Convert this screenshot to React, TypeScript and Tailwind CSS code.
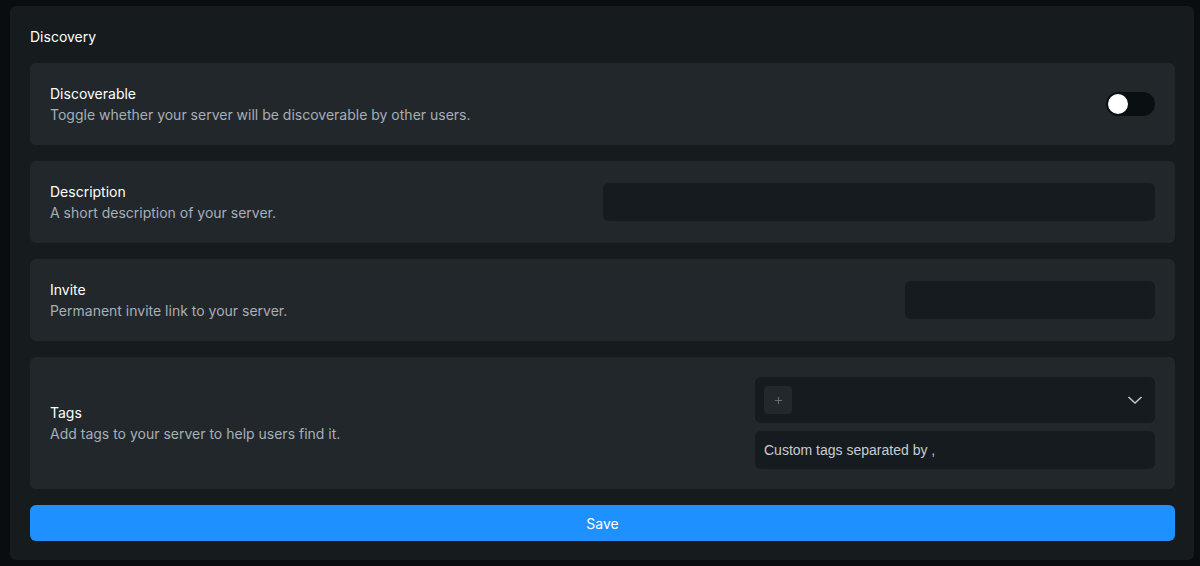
import React, { useState } from "react";
import { Plus } from "lucide-react";

function Row({
  title,
  desc,
  children,
  tall,
}: {
  title: string;
  desc: string;
  children?: React.ReactNode;
  tall?: boolean;
}) {
  return (
    <div
      className={`bg-[#21272b] rounded-md px-5 flex items-center justify-between ${
        tall ? "py-5" : "h-[82px]"
      }`}
    >
      <div>
        <div className="text-[14px] font-normal text-white leading-5">{title}</div>
        <div className="text-[14px] text-[#a7afb7] leading-5 mt-[1px]">{desc}</div>
      </div>
      {children}
    </div>
  );
}

export default function App() {
  const [on, setOn] = useState(false);

  return (
    <div className="min-h-[566px] bg-[#0a0d0f] pt-[6px] pl-[10px] pr-[6px] pb-[6px] font-['Inter',sans-serif]">
      <div className="bg-[#161b1e] rounded-md pl-5 pr-[19px] pt-[21px] pb-[19px]">
        <h2 className="text-[14px] font-normal text-white leading-5 mb-4">Discovery</h2>

        <div className="flex flex-col gap-4">
          <Row title="Discoverable" desc="Toggle whether your server will be discoverable by other users.">
            <button
              onClick={() => setOn(!on)}
              className={`w-[49px] h-[24px] rounded-full p-[2px] flex items-center ${
                on ? "bg-[#1e90ff] justify-end" : "bg-[#0a0f12] justify-start"
              }`}
            >
              <span className="w-[20px] h-[20px] rounded-full bg-white block" />
            </button>
          </Row>

          <Row title="Description" desc="A short description of your server.">
            <input className="w-[552px] h-[38px] bg-[#161b1f] rounded-md outline-none px-3 text-sm text-white" />
          </Row>

          <Row title="Invite" desc="Permanent invite link to your server.">
            <input className="w-[250px] h-[38px] bg-[#161b1f] rounded-md outline-none px-3 text-sm text-white" />
          </Row>

          <Row title="Tags" desc="Add tags to your server to help users find it." tall>
            <div className="w-[400px] flex flex-col gap-2">
              <div className="h-[46px] bg-[#161b1f] rounded-md flex items-center justify-between pl-[9px] pr-[12px]">
                <div className="w-[28px] h-[28px] rounded bg-[#22282c] flex items-center justify-center">
                  <Plus className="w-[11px] h-[11px] text-[#6b747c]" strokeWidth={2} />
                </div>
                <svg width="16" height="10" viewBox="0 0 16 10" fill="none">
                  <path d="M1.5 2 L8 8 L14.5 2" stroke="#c3cad1" strokeWidth="1.5" />
                </svg>
              </div>
              <input
                placeholder="Custom tags separated by ,"
                className="h-[38px] bg-[#161b1f] rounded-md outline-none px-[9px] text-[14px] text-white placeholder:text-[#c8cdd2] font-['Liberation_Sans',sans-serif]"
              />
            </div>
          </Row>
        </div>

        <button className="mt-4 w-full h-[36px] bg-[#1e90ff] rounded-md text-white text-[14px] font-normal">
          Save
        </button>
      </div>
    </div>
  );
}
